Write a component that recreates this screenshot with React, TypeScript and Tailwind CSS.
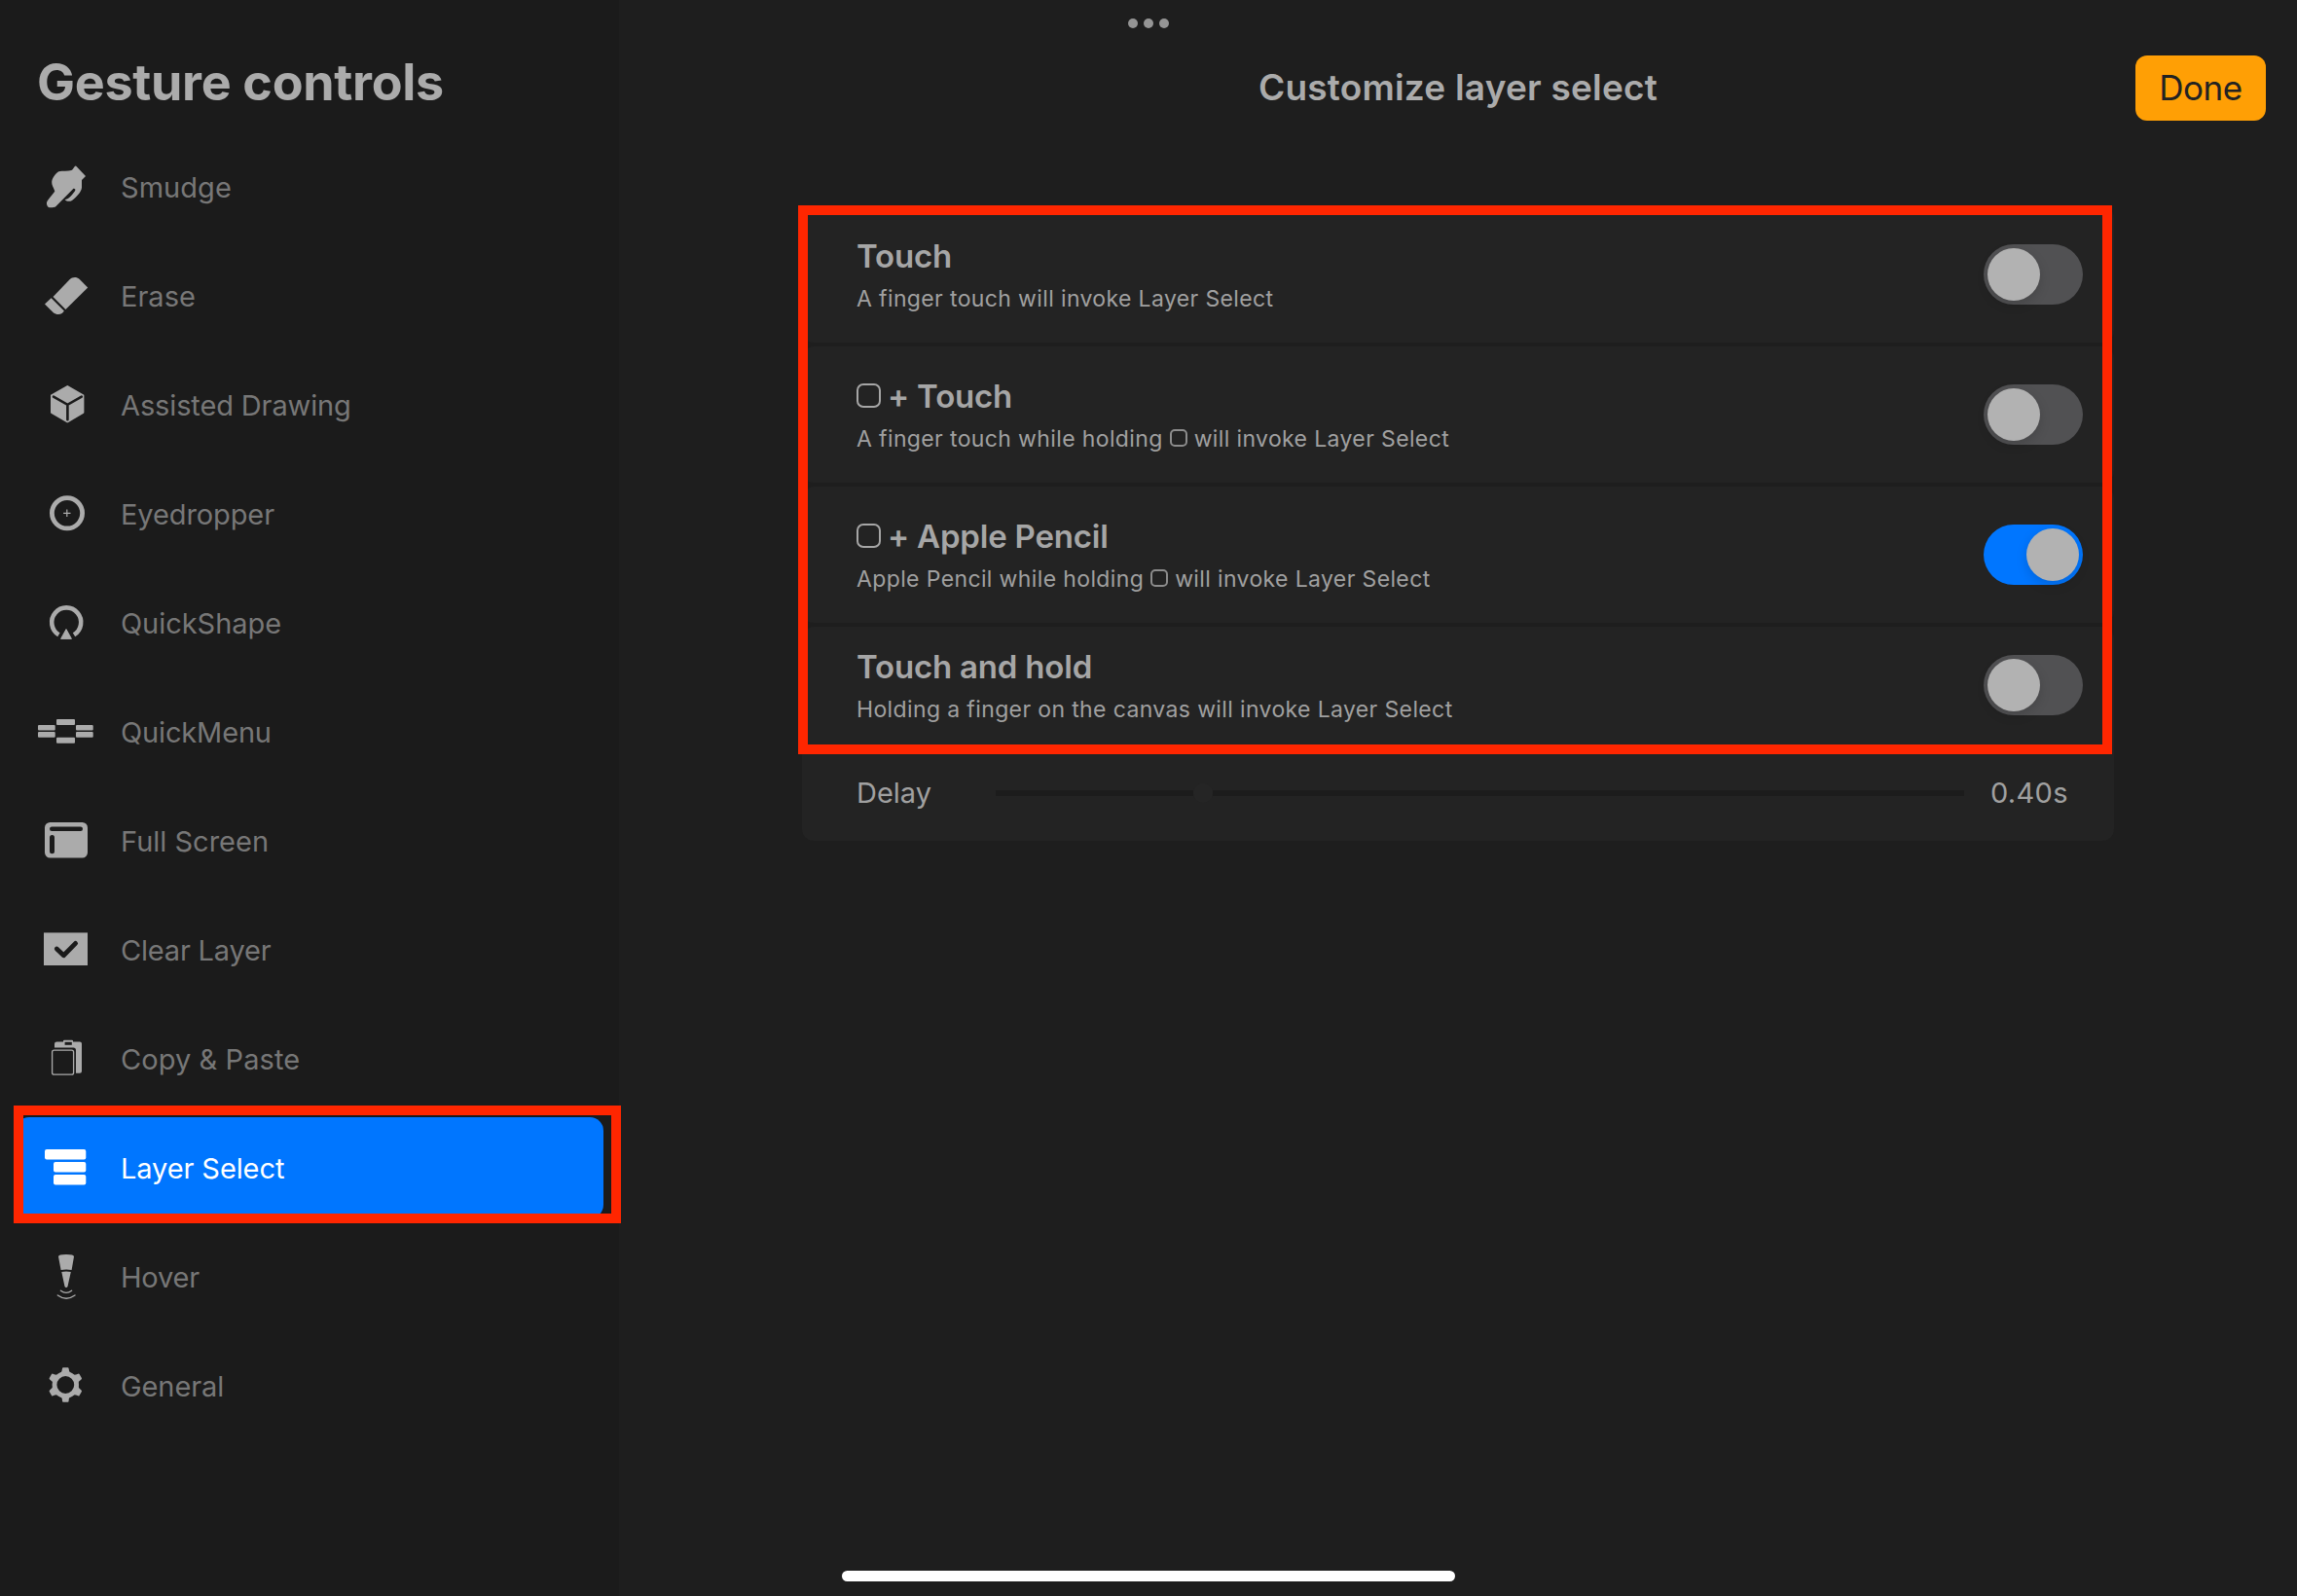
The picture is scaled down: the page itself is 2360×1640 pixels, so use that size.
import type { ReactNode } from "react";

type Item = { label: string; icon: ReactNode; tracking: string; active?: boolean };

function Glyph({ children }: { children: ReactNode }) {
  return (
    <svg viewBox="0 0 72 72" className="h-[72px] w-[72px] shrink-0" fill="currentColor">
      {children}
    </svg>
  );
}

const HOLE = "#1b1b1b";

const Smudge = (
  <Glyph>
    <path d="M46.3 14.8 L56 25 L52 29 V36.5 C52 41 46 47 42 49.9 C39.5 51.3 36.5 51 34.7 49.2 C38.5 48.6 41 45.5 45.2 40 C46 38.3 44 37.2 43 38.3 L25 56.4 C24 57.2 19 57.3 18 56.9 C16 56 15.7 52.5 16.2 51.5 C17.5 48.5 22.5 43.5 24.3 40.5 C23 36.5 21 34 21.2 31 C21.4 27 25.5 21.5 28.3 20.2 C32 19.5 38 20 41.3 19 C43 18 44 16 44.6 15.2 Q45.5 14.2 46.3 14.8 Z" />
  </Glyph>
);

const Erase = (
  <Glyph>
    <path d="M22.5 36.9 L39.5 19.2 C42.3 16.4 46.8 16.3 49.5 18.8 L58.2 27.5 L35.4 50 Z" />
    <path d="M20.6 38.2 L33.9 51.5 L32 53.8 C29.2 55.6 25.5 55.4 22.8 53.2 L14 44.4 Z" />
  </Glyph>
);

const Cube = (
  <Glyph>
    <path
      d="M37.3 17 L53.4 26.4 V43.8 L37.3 53.3 L21 43.8 V26.4 Z"
      stroke="currentColor"
      strokeWidth="2"
      strokeLinejoin="round"
    />
    <path
      d="M23 27.6 L37.4 35.8 L51.8 27.6 M37.4 35.8 V51.3"
      fill="none"
      stroke={HOLE}
      strokeWidth="2.6"
      strokeLinecap="round"
    />
  </Glyph>
);

const Eyedropper = (
  <Glyph>
    <circle cx="37" cy="35.3" r="15.6" fill="none" stroke="currentColor" strokeWidth="4.8" />
    <path d="M33.1 35.3 H40.5 M36.8 31.6 V39" stroke="currentColor" strokeWidth="1.2" />
  </Glyph>
);

const QuickShape = (
  <Glyph>
    <path
      d="M28.4 48.2 A15 15 0 1 1 44 48.2"
      fill="none"
      stroke="currentColor"
      strokeWidth="4.6"
    />
    <path d="M36 42.6 L41.4 52.4 H30.6 Z" stroke="currentColor" strokeWidth="1" strokeLinejoin="round" />
  </Glyph>
);

const QuickMenu = (
  <Glyph>
    <rect x="26" y="23" width="19" height="6" rx="1" />
    <rect x="26" y="41.8" width="19" height="6" rx="1" />
    <rect x="7" y="29" width="17.7" height="5.6" rx="1" />
    <rect x="7" y="36" width="17.7" height="5.8" rx="1" />
    <rect x="46" y="29" width="17.7" height="5.6" rx="1" />
    <rect x="46" y="36" width="17.7" height="5.8" rx="1" />
  </Glyph>
);

const FullScreen = (
  <Glyph>
    <rect x="14" y="17" width="44" height="36.6" rx="5.5" />
    <rect x="19" y="21.6" width="34" height="4.4" rx="2.2" fill={HOLE} />
    <rect x="19" y="30" width="5" height="19.2" rx="2.5" fill={HOLE} />
  </Glyph>
);

const ClearLayer = (
  <Glyph>
    <rect x="13" y="18.4" width="45" height="33.6" />
    <path
      d="M26.3 35 L33.4 41.8 L45.6 29.4"
      fill="none"
      stroke={HOLE}
      strokeWidth="4.8"
      strokeLinecap="round"
      strokeLinejoin="round"
    />
  </Glyph>
);

const CopyPaste = (
  <Glyph>
    <path d="M24 24.4 V20.8 Q24 18.4 26.4 18.4 H33 V17.6 Q33 16.7 34 16.7 H42 Q43 16.7 43 17.6 V18.4 H50 Q52 18.4 52 20.4 V48.8 Q52 50.8 50 50.8 H46 V27 Q46 24.4 43.4 24.4 Z" />
    <rect x="34.6" y="18.8" width="7.2" height="3" fill={HOLE} />
    <rect x="21.6" y="27.2" width="22" height="25" rx="2" fill="none" stroke="currentColor" strokeWidth="1.3" />
  </Glyph>
);

const LayerSelect = (
  <Glyph>
    <rect x="14" y="17" width="42.3" height="10.6" rx="2" />
    <rect x="23" y="30" width="33.3" height="10.4" rx="2" />
    <rect x="23" y="43" width="33.3" height="10.4" rx="2" />
  </Glyph>
);

const Hover = (
  <Glyph>
    <path d="M28 15.2 Q28 13 36 13 Q44 13 44 15.2 L41.6 28.9 Q36 28 30.6 28.9 Z" />
    <path d="M31.3 30.9 Q36 30.2 40.8 30.9 L37.6 45.5 Q37.2 47 36 47 Q34.8 47 34.4 45.5 Z" />
    <path
      d="M30.4 50.2 Q36 54.6 41.6 50.2 M27.3 55 Q36 61.4 45 55"
      fill="none"
      stroke="currentColor"
      strokeWidth="1.4"
      strokeLinecap="round"
    />
  </Glyph>
);

const General = (
  <Glyph>
    <circle cx="35.3" cy="35" r="11.3" fill="none" stroke="currentColor" strokeWidth="4.8" />
    {[0, 60, 120, 180, 240, 300].map((a) => (
      <path
        key={a}
        d="M29.9 23.4 Q31.8 22 32 18.2 Q32.1 17.2 33 17.2 H37.6 Q38.5 17.2 38.6 18.2 Q38.8 22 40.7 23.4 L38.5 25 H32.1 Z"
        transform={`rotate(${a} 35.3 35)`}
      />
    ))}
  </Glyph>
);

const items: Item[] = [
  { label: "Smudge", icon: Smudge, tracking: "tracking-[0.05px]" },
  { label: "Erase", icon: Erase, tracking: "tracking-[0px]" },
  { label: "Assisted Drawing", icon: Cube, tracking: "tracking-[-0.13px]" },
  { label: "Eyedropper", icon: Eyedropper, tracking: "tracking-[-0.1px]" },
  { label: "QuickShape", icon: QuickShape, tracking: "tracking-[-0.05px]" },
  { label: "QuickMenu", icon: QuickMenu, tracking: "tracking-[-0.15px]" },
  { label: "Full Screen", icon: FullScreen, tracking: "tracking-[0px]" },
  { label: "Clear Layer", icon: ClearLayer, tracking: "tracking-[-0.2px]" },
  { label: "Copy & Paste", icon: CopyPaste, tracking: "tracking-[0.08px]" },
  { label: "Layer Select", icon: LayerSelect, tracking: "tracking-[-0.1px]", active: true },
  { label: "Hover", icon: Hover, tracking: "tracking-[-0.2px]" },
  { label: "General", icon: General, tracking: "tracking-[-0.1px]" },
];

function SidebarItem({ item }: { item: Item }) {
  return (
    <li className="flex h-28 items-center pr-4 pl-4">
      <div
        className={
          item.active
            ? "flex h-[104px] w-full items-center rounded-[14px] bg-[#0076ff] pl-4 text-white"
            : "flex h-[104px] w-full items-center pl-4 text-[#ababab]"
        }
      >
        {item.icon}
        <span
          className={`ml-5 pt-0.5 text-[29px] leading-10 whitespace-nowrap ${item.tracking} ${
            item.active ? "text-white" : "text-[#777777]"
          }`}
        >
          {item.label}
        </span>
      </div>
    </li>
  );
}

function Toggle({ on = false }: { on?: boolean }) {
  return (
    <div
      className={
        on
          ? "flex h-[62px] w-[102px] shrink-0 items-center justify-end rounded-full bg-[#0076ff] px-1"
          : "flex h-[62px] w-[102px] shrink-0 items-center justify-start rounded-full bg-[#515153] px-1"
      }
    >
      <div className="size-[54px] rounded-full bg-[#b2b2b2] shadow-[0_4px_12px_rgba(0,0,0,0.15)]" />
    </div>
  );
}

function BigKey() {
  return (
    <span className="mr-[7px] inline-block size-[25px] rounded-[7px] border-2 border-[#a6a6a6] align-[0px]" />
  );
}

function SmallKey() {
  return (
    <span className="mr-[7px] ml-[7px] inline-block size-[18px] rounded-[5px] border-2 border-[#8c8c8c] align-[0px]" />
  );
}

function SettingText({ title, detail }: { title: ReactNode; detail: ReactNode }) {
  return (
    <div className="flex h-[82px] flex-col">
      <h2 className="h-11 text-[33px] leading-11 font-semibold tracking-[-0.2px] whitespace-nowrap text-[#a6a6a6]">
        {title}
      </h2>
      <p className="h-11 text-[23px] leading-11 tracking-[0.37px] whitespace-nowrap text-[#a0a0a0]">{detail}</p>
    </div>
  );
}

function Setting({ title, detail, on }: { title: ReactNode; detail: ReactNode; on?: boolean }) {
  return (
    <div className="flex h-[140px] items-center justify-between rounded-xl bg-[#232323] pr-8 pl-14">
      <SettingText title={title} detail={detail} />
      <Toggle on={on} />
    </div>
  );
}

export default function App() {
  return (
    <div className="relative flex h-[1640px] w-[2360px] overflow-hidden bg-[#1e1e1e] font-[Inter,sans-serif]">
      <aside className="h-full w-[636px] shrink-0 bg-[#1b1b1b] pt-[53px]">
        <h1 className="mb-[19px] h-16 pl-[38px] text-[52px] leading-16 font-bold tracking-[-0.3px] whitespace-nowrap text-[#ababab]">
          Gesture controls
        </h1>
        <ul>
          {items.map((item) => (
            <SidebarItem key={item.label} item={item} />
          ))}
        </ul>
      </aside>

      <main className="flex flex-1 flex-col">
        <header className="grid h-[212px] grid-cols-[1fr_auto_1fr] items-start pt-[57px] pr-8">
          <span />
          <h2 className="ml-8 h-[67px] text-[37px] leading-[65px] font-semibold tracking-[0.2px] whitespace-nowrap text-[#ababab]">
            Customize layer select
          </h2>
          <button className="flex h-[67px] w-[134px] items-center justify-center justify-self-end rounded-xl bg-[#ff9f05] text-[35px] leading-[65px] tracking-[-0.4px] text-[#222222]">
            Done
          </button>
        </header>

        <section className="ml-[188px] flex w-[1348px] flex-col gap-1">
          <Setting title="Touch" detail="A finger touch will invoke Layer Select" />
          <Setting
            title={
              <>
                <BigKey />+ Touch
              </>
            }
            detail={
              <>
                A finger touch while holding
                <SmallKey />
                will invoke Layer Select
              </>
            }
          />
          <Setting
            on
            title={
              <>
                <BigKey />+ Apple Pencil
              </>
            }
            detail={
              <>
                Apple Pencil while holding
                <SmallKey />
                will invoke Layer Select
              </>
            }
          />
          <div className="flex h-[220px] flex-col rounded-xl bg-[#232323] pr-8 pl-14">
            <div className="flex h-[120px] shrink-0 items-center justify-between">
              <SettingText title="Touch and hold" detail="Holding a finger on the canvas will invoke Layer Select" />
              <Toggle />
            </div>
            <div className="flex h-[100px] items-center pt-0.5 text-[29px] text-[#a0a0a0]">
              <span className="w-[143px]">Delay</span>
              <div className="flex h-5 w-[995px] items-center">
                <div className="h-1.5 w-[203px] bg-[#1c1c1c]" />
                <div className="size-5 rounded-full bg-[#252525]" />
                <div className="h-1.5 flex-1 bg-[#1c1c1c]" />
              </div>
              <span className="ml-[27px] tracking-[0.3px]">0.40s</span>
            </div>
          </div>
        </section>
      </main>

      <div className="absolute top-[19px] left-[1159px] flex gap-1.5">
        <span className="size-2.5 rounded-full bg-[#959595]" />
        <span className="size-2.5 rounded-full bg-[#959595]" />
        <span className="size-2.5 rounded-full bg-[#959595]" />
      </div>
      <div className="absolute top-[1136px] left-[14px] h-[121px] w-[624px] border-10 border-[#ff2600]" />
      <div className="absolute top-[211px] left-[820px] h-[564px] w-[1350px] border-10 border-[#ff2600]" />
      <div className="absolute top-[1614px] left-[865px] h-[11px] w-[630px] rounded-full bg-white" />
    </div>
  );
}
